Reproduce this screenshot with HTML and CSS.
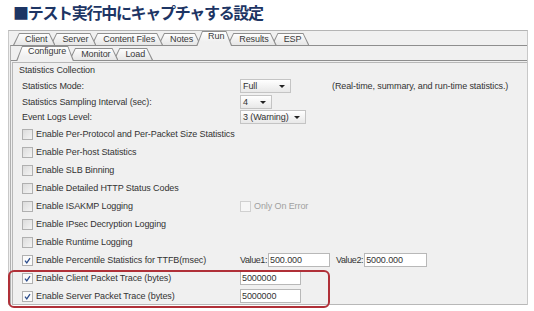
FILE: index.html
```html
<!DOCTYPE html>
<html lang="ja">
<head>
  <meta charset="UTF-8">
  <title>テスト実行中にキャプチャする設定</title>
  <link rel="stylesheet" href="styles.css">
</head>
<body>
  <h1 class="title">■テスト実行中にキャプチャする設定</h1>

  <div class="window">
    <!-- main tabs -->
    <div class="tabs main-tabs">
      <div class="tab"><span>Client</span></div>
      <div class="tab"><span>Server</span></div>
      <div class="tab"><span>Content Files</span></div>
      <div class="tab"><span>Notes</span></div>
      <div class="tab active"><span>Run</span></div>
      <div class="tab"><span>Results</span></div>
      <div class="tab"><span>ESP</span></div>
    </div>

    <div class="pane">
      <!-- sub tabs -->
      <div class="tabs sub-tabs">
        <div class="tab active"><span>Configure</span></div>
        <div class="tab"><span>Monitor</span></div>
        <div class="tab"><span>Load</span></div>
      </div>

      <div class="subpane">
        <div class="group">
          <div class="group-title">Statistics Collection</div>

          <div class="row combo-row">
            <span class="label">Statistics Mode:</span>
            <span class="select sel-mode">Full<i class="arrow"></i></span>
            <span class="note">(Real-time, summary, and run-time statistics.)</span>
          </div>
          <div class="row combo-row short">
            <span class="label">Statistics Sampling Interval (sec):</span>
            <span class="select sel-interval">4<i class="arrow"></i></span>
          </div>
          <div class="row combo-row">
            <span class="label">Event Logs Level:</span>
            <span class="select sel-level">3 (Warning)<i class="arrow"></i></span>
          </div>

          <div class="row check-row">
            <span class="label"><i class="box"></i>Enable Per-Protocol and Per-Packet Size Statistics</span>
          </div>
          <div class="row check-row">
            <span class="label"><i class="box"></i>Enable Per-host Statistics</span>
          </div>
          <div class="row check-row">
            <span class="label"><i class="box"></i>Enable SLB Binning</span>
          </div>
          <div class="row check-row">
            <span class="label"><i class="box"></i>Enable Detailed HTTP Status Codes</span>
          </div>
          <div class="row check-row">
            <span class="label"><i class="box"></i>Enable ISAKMP Logging</span>
            <span class="label disabled"><i class="box"></i>Only On Error</span>
          </div>
          <div class="row check-row">
            <span class="label"><i class="box"></i>Enable IPsec Decryption Logging</span>
          </div>
          <div class="row check-row">
            <span class="label"><i class="box"></i>Enable Runtime Logging</span>
          </div>
          <div class="row check-row">
            <span class="label"><i class="box checked"><svg viewBox="0 0 10 10"><path d="M2.2 5.2 L4.2 7.6 L7.8 2.4"/></svg></i>Enable Percentile Statistics for TTFB(msec)</span>
            <span class="field-label">Value1:</span><span class="input in-value1">500.000</span>
            <span class="field-label second">Value2:</span><span class="input in-value2">5000.000</span>
          </div>
          <div class="row check-row">
            <span class="label"><i class="box checked"><svg viewBox="0 0 10 10"><path d="M2.2 5.2 L4.2 7.6 L7.8 2.4"/></svg></i>Enable Client Packet Trace (bytes)</span>
            <span class="input in-trace">5000000</span>
          </div>
          <div class="row check-row">
            <span class="label"><i class="box checked"><svg viewBox="0 0 10 10"><path d="M2.2 5.2 L4.2 7.6 L7.8 2.4"/></svg></i>Enable Server Packet Trace (bytes)</span>
            <span class="input in-trace">5000000</span>
          </div>
        </div>
      </div>
    </div>
  </div>

  <!-- red frame drawn over the two packet trace rows -->
  <div class="highlight"></div>
</body>
</html>
```

FILE: styles.css
```css
* {
  margin: 0;
  padding: 0;
  box-sizing: border-box;
}

body {
  position: relative;
  width: 534px;
  height: 311px;
  background: #fff;
  font-family: 'Liberation Sans', Arial, sans-serif;
  font-size: 9px;
  letter-spacing: -0.1px;
  color: #333;
  overflow: hidden;
}

.title {
  height: 30px;
  padding-left: 13px;
  font-family: 'Noto Sans CJK JP', sans-serif;
  font-size: 16px;
  font-weight: bold;
  line-height: 24px;
  letter-spacing: -1.3px;
  color: #1d3564;
}

.window {
  width: 520px;
  height: 275px;
  margin-left: 8px;
  background: #f0f0f0;
  border-top: 1px solid #b4b4b4;
  border-left: 1px solid #c8c8c8;
  border-right: 1px solid #c8c8c8;
}

/* tabs */
.tabs {
  display: flex;
  align-items: flex-end;
  height: 14px;
}

.main-tabs { padding-left: 4px; }
.sub-tabs { padding-left: 5px; height: 14px; }

.tab {
  position: relative;
  height: 12px;
  margin-left: -5px;
  padding: 0 8px 0 12px;
  background: #8e8e8e;
  clip-path: polygon(0 100%, 6px 0, calc(100% - 6px) 0, 100% 100%);
}

.tab:first-child { margin-left: 0; }

.tab::before {
  content: "";
  position: absolute;
  top: 1px;
  left: 0;
  right: 0;
  bottom: 0;
  background: linear-gradient(#fdfdfd, #e6e6e6);
  clip-path: polygon(1.3px 100%, 6.5px 0, calc(100% - 6.5px) 0, calc(100% - 1.3px) 100%);
}

.tab span {
  position: relative;
  display: block;
  line-height: 13px;
  color: #3a3a3a;
}

.tab:nth-child(1) { z-index: 7; }
.tab:nth-child(2) { z-index: 6; }
.tab:nth-child(3) { z-index: 5; }
.tab:nth-child(4) { z-index: 4; }
.tab:nth-child(5) { z-index: 3; }
.tab:nth-child(6) { z-index: 2; }
.tab:nth-child(7) { z-index: 1; }

.tab.active {
  z-index: 10;
  height: 15px;
  margin-bottom: -1px;
}

.tab.active::before {
  bottom: 0;
  background: linear-gradient(#ffffff, #f0f0f0 70%);
}

.tab.active span {
  line-height: 11px;
}

.pane {
  height: 260px;
  margin-left: 1px;
  border-top: 1px solid #8e8e8e;
  border-left: 1px solid #b0b0b0;
}

.subpane {
  border-top: 1px solid #8e8e8e;
  padding-top: 1px;
  padding-left: 1px;
}

.group {
  height: 243px;
  padding-left: 9px;
  border: 1px solid #b8b8b8;
  border-right: none;
}

.group-title {
  height: 15px;
  margin-left: -3px;
  line-height: 15px;
}

/* rows */
.row {
  display: flex;
  align-items: center;
}

.combo-row { height: 16px; }
.combo-row.short { height: 15px; }
.check-row { height: 18px; }

.row > .label:first-child {
  width: 218px;
  flex: none;
  white-space: nowrap;
}

.label {
  display: flex;
  align-items: center;
}

.label.disabled { color: #a0a0a0; }
.label.disabled .box { background: #f6f6f6; border-color: #d0d0d0; }

.box {
  display: block;
  width: 11px;
  height: 11px;
  margin-right: 3px;
  border: 1px solid #b0b0b0;
  background: linear-gradient(135deg, #dcdcdc, #f4f4f4);
}

.box.checked { background: #fafafa; }

.box svg {
  display: block;
  width: 9px;
  height: 9px;
}

.box path {
  fill: none;
  stroke: #2b4d8c;
  stroke-width: 1.4;
}

.select {
  position: relative;
  display: block;
  height: 14px;
  padding-left: 2px;
  line-height: 13px;
  border: 1px solid #c4c4c4;
  background: linear-gradient(#ffffff, #e8e8e8);
}

.sel-mode { width: 51px; }
.sel-interval { width: 32px; }
.sel-level { width: 66px; }

.arrow {
  position: absolute;
  right: 5px;
  top: 5px;
  border-left: 3px solid transparent;
  border-right: 3px solid transparent;
  border-top: 3px solid #222;
}

.note { margin-left: 41px; }

.field-label {
  margin-right: 1px;
  letter-spacing: -0.4px;
}

.field-label.second { margin-left: 6px; }

.input {
  display: block;
  height: 14px;
  padding-left: 1px;
  line-height: 13px;
  background: #fff;
  border: 1px solid #b8b8b8;
  color: #333;
}

.in-value1 { width: 62px; }
.in-value2 { width: 63px; }
.in-trace { width: 61px; }

.highlight {
  position: absolute;
  left: 8px;
  top: 270px;
  width: 322px;
  height: 38px;
  border: 2px solid #b03038;
  border-radius: 6px;
}
```
